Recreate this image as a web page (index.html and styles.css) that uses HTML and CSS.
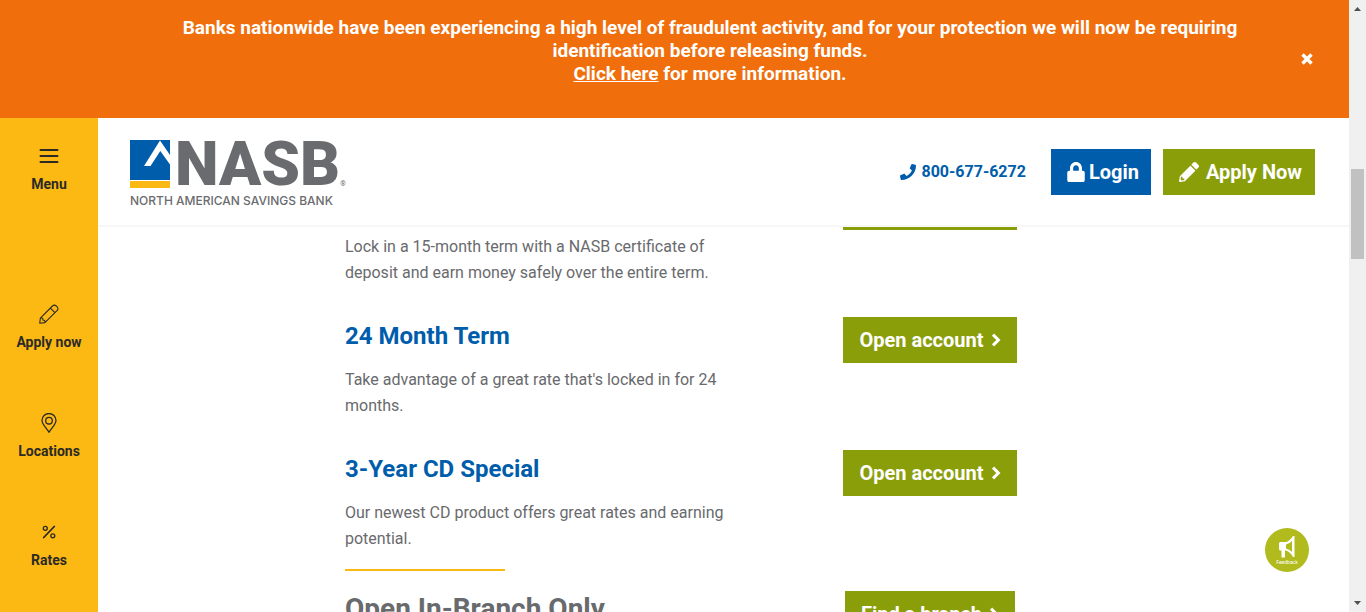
FILE: index.html
```html
<!DOCTYPE html>
<html lang="en">
<head>
<meta charset="utf-8">
<meta name="viewport" content="width=device-width, initial-scale=1">
<title>NASB</title>
<link rel="stylesheet" href="styles.css">
</head>
<body>
<svg class="defs" aria-hidden="true">
  <symbol id="chevron" viewBox="0 0 10 14"><path d="M2 1.600 7.400 7 2 12.400" fill="none" stroke="currentColor" stroke-width="3"/></symbol>
</svg>
<div class="page">
  <div class="site">
    <section class="alert" aria-label="Alert">
      <p class="alert-text">Banks nationwide have been experiencing a high level of fraudulent activity, and for your protection we will now be requiring identification before releasing funds.<br><a href="#info">Click here</a> for more information.</p>
      <button class="alert-close" type="button" aria-label="Close">
        <svg width="12" height="12" viewBox="0 0 12 12"><path d="M1.500 1.500 10.500 10.500M10.500 1.500 1.500 10.500" stroke="currentColor" stroke-width="3.400"/></svg>
      </button>
    </section>
    <div class="body">
      <nav class="rail" aria-label="Main">
        <button class="rail-item rail-menu" type="button">
          <svg width="20" height="20" viewBox="0 0 20 20"><path d="M1.500 4h17M1.500 10h17M1.500 16h17" stroke="currentColor" stroke-width="2" stroke-linecap="round"/></svg>
          Menu
        </button>
        <a class="rail-item" href="#apply">
          <svg width="22" height="20" viewBox="0 0 22 22" fill="none" stroke="currentColor" stroke-width="1.200" stroke-linejoin="round"><path d="M.8 21.200 1.500 15.500 14.800 2.200a3 3 0 0 1 4.200 0l.8.8a3 3 0 0 1 0 4.200L6.500 20.500ZM12.500 4.500l5 5M1.500 15.500c2-.6 3 .4 2.800 2.200 1.700-.2 2.700 1 2.200 2.800"/></svg>
          Apply now
        </a>
        <a class="rail-item" href="#locations">
          <svg width="20" height="20" viewBox="0 0 20 20" fill="none" stroke="currentColor" stroke-width="1.300"><path d="M10 19.300C8.500 16.300 3 11.500 3 7.500a7 7 0 0 1 14 0c0 4-5.500 8.800-7 11.800Z"/><circle cx="10" cy="7.700" r="3.300"/></svg>
          Locations
        </a>
        <a class="rail-item" href="#rates">
          <svg width="20" height="20" viewBox="0 0 20 20" fill="none" stroke="currentColor" stroke-width="1.300"><path d="M4.700 15.500 15.300 4.500" stroke-width="1.800" stroke-linecap="round"/><circle cx="6.300" cy="6.300" r="2"/><circle cx="13.800" cy="13.800" r="2"/></svg>
          Rates
        </a>
      </nav>
      <div class="column">
        <header class="header">
          <a class="logo" href="#home">
            <span class="logo-top">
              <svg class="logo-mark" width="40" height="48" viewBox="0 0 40 48"><path fill="#005dab" d="M0 0h40v40H0z"/><path fill="#fdb913" d="M0 41h40v7H0z"/><path fill="#fff" d="M30 .5 40 15V24.500L30.300 11 20.500 26H14Z"/></svg>
              <span class="logo-name">NASB</span>
              <span class="logo-reg">®</span>
            </span>
            <span class="logo-sub">NORTH AMERICAN SAVINGS BANK</span>
          </a>
          <div class="actions">
            <a class="phone" href="tel:8006776272">
              <svg width="16" height="16" viewBox="0 0 512 512" fill="currentColor"><path d="M493.400 24.600l-104-24c-11.300-2.600-22.900 3.300-27.500 13.900l-48 112c-4.200 9.800-1.400 21.300 6.900 28l60.600 49.600c-36 76.700-98.900 140.500-177.200 177.200l-49.600-60.600c-6.800-8.300-18.200-11.100-28-6.900l-112 48C3.900 366.500-2 378.100.6 389.400l24 104C27.100 504.200 36.700 512 48 512c256.100 0 464-207.500 464-464 0-11.200-7.700-20.900-18.600-23.400z"/></svg>
              800-677-6272
            </a>
            <a class="btn btn-login" href="#login">
              <svg width="18" height="20" viewBox="0 0 448 512" fill="currentColor"><path d="M400 224h-24v-72C376 68.200 307.800 0 224 0S72 68.200 72 152v72H48c-26.500 0-48 21.500-48 48v192c0 26.500 21.500 48 48 48h352c26.500 0 48-21.500 48-48V272c0-26.500-21.500-48-48-48zm-104 0H152v-72c0-39.700 32.300-72 72-72s72 32.300 72 72v72z"/></svg>
              Login
            </a>
            <a class="btn btn-apply" href="#apply">
              <svg width="20" height="20" viewBox="0 0 512 512" fill="currentColor"><path d="M497.900 142.100l-46.100 46.100c-4.700 4.700-12.300 4.700-17 0l-111-111c-4.700-4.700-4.700-12.300 0-17l46.100-46.100c18.700-18.700 49.100-18.700 67.900 0l60.100 60.100c18.800 18.700 18.800 49.100 0 67.900zM284.200 99.800L21.600 362.400.4 483.900c-2.900 16.400 11.400 30.600 27.800 27.800l121.500-21.300 262.600-262.600c4.700-4.700 4.700-12.300 0-17l-111-111c-4.800-4.700-12.400-4.700-17.100 0zM88 424h48v36.300l-64.500 11.300-31.100-31.100L51.700 376H88v48z"/></svg>
              Apply Now
            </a>
          </div>
        </header>
        <main class="content">
          <div class="offers">
            <section class="offer offer-first">
              <p class="offer-text">Lock in a 15-month term with a NASB certificate of deposit and earn money safely over the entire term.</p>
              <a class="btn" href="#open">Open account <svg width="10" height="14"><use href="#chevron"/></svg></a>
            </section>
            <section class="offer">
              <div>
                <h3 class="offer-title">24 Month Term</h3>
                <p class="offer-text">Take advantage of a great rate that's locked in for 24 months.</p>
              </div>
              <a class="btn" href="#open">Open account <svg width="10" height="14"><use href="#chevron"/></svg></a>
            </section>
            <section class="offer">
              <div>
                <h3 class="offer-title">3-Year CD Special</h3>
                <p class="offer-text">Our newest CD product offers great rates and earning potential.</p>
              </div>
              <a class="btn" href="#open">Open account <svg width="10" height="14"><use href="#chevron"/></svg></a>
            </section>
            <section class="offer branch">
              <h2 class="branch-title">Open In-Branch Only</h2>
              <a class="btn" href="#branch">Find a branch <svg width="10" height="14"><use href="#chevron"/></svg></a>
            </section>
          </div>
        </main>
      </div>
    </div>
    <button class="feedback" type="button">
      <svg width="20" height="22" viewBox="0 0 20 22"><path fill="#fff" fill-rule="evenodd" d="M3 6h6.500C12 5 14 3 16 0H17.500V21H16C14.500 18 12 15.500 9 14.500H8V21.500H4.500V14.500H3L2 13.500V7ZM9 8.500V12.500Q13 13.500 15 16V5Q12.500 7.800 9 8.500Z"/></svg>
      Feedback
    </button>
  </div>
  <div class="scrollbar" aria-hidden="true">
    <svg width="7" height="4" viewBox="0 0 7 4"><path fill="#505050" d="M0 4 3.500 0 7 4z"/></svg>
    <div class="track"><div class="thumb"></div></div>
    <svg width="7" height="4" viewBox="0 0 7 4"><path fill="#505050" d="M0 0h7L3.500 4z"/></svg>
  </div>
</div>
</body>
</html>
```

FILE: styles.css
```css
* { box-sizing: border-box; }

body {
  margin: 0;
  font-family: Roboto, "Liberation Sans", sans-serif;
  font-size: 16px;
  color: #696a6d;
  background: #fff;
}

h2, h3, p { margin: 0; }
a { color: inherit; text-decoration: none; }
button { border: 0; padding: 0; background: none; font: inherit; color: inherit; cursor: pointer; }
svg { flex: none; }

.defs { position: absolute; width: 0; height: 0; }

.page { display: flex; height: 100vh; overflow: hidden; }
.site { position: relative; flex: 1; min-width: 0; display: flex; flex-direction: column; }

.alert {
  display: flex;
  align-items: center;
  padding: 16px 36px 33px 72px;
  background: #f06e0c;
  color: #fff;
}
.alert-text {
  flex: 1;
  padding: 0 45px 0 92px;
  text-align: center;
  font-size: 19px;
  font-weight: 700;
  line-height: 23px;
}
.alert-text a { text-decoration: underline; }
.alert-close { display: flex; margin-top: 16px; }

.body { flex: 1; min-height: 0; display: flex; }

.rail {
  flex: none;
  width: 98px;
  padding-top: 28px;
  display: flex;
  flex-direction: column;
  gap: 61px;
  background: #fdb913;
  color: #2b2a26;
}
.rail-item {
  display: flex;
  flex-direction: column;
  align-items: center;
  gap: 8px;
  font-size: 14px;
  font-weight: 700;
  line-height: 20px;
}
.rail-menu { margin-bottom: 49px; }

.column { flex: 1; min-width: 0; display: flex; flex-direction: column; }

.header {
  flex: none;
  display: flex;
  align-items: center;
  justify-content: space-between;
  height: 109px;
  padding: 0 34px 0 32px;
  border-bottom: 2px solid #f7f7f7;
}
.logo { display: flex; flex-direction: column; gap: 6px; padding-top: 4px; color: #6a6b6e; }
.logo-top { display: flex; align-items: flex-end; }
.logo-name {
  margin-left: 5px;
  font-size: 62px;
  font-weight: 900;
  line-height: 48px;
}
.logo-reg { font-size: 7px; line-height: 8px; }
.logo-sub { font-family: Inter, sans-serif; font-size: 12px; font-weight: 500; line-height: 14px; }

.actions { display: flex; align-items: center; gap: 12px; }
.phone {
  display: flex;
  align-items: center;
  gap: 6px;
  margin-right: 13px;
  color: #005dab;
  font-weight: 700;
}
.btn {
  display: flex;
  align-items: center;
  justify-content: center;
  gap: 7px;
  height: 46px;
  padding: 0 16px;
  background: #8a9e0a;
  color: #fff;
  font-size: 20px;
  font-weight: 700;
  white-space: nowrap;
}
.btn-login { gap: 4px; padding: 0 12px 0 16px; background: #005dab; }
.btn-apply { padding: 0 13px 0 16px; }

.content { flex: 1; min-height: 0; overflow: hidden; padding: 0 16px; }
.offers { max-width: 757px; margin: 0 auto; }
.offer {
  display: grid;
  grid-template-columns: 1fr 344px;
  column-gap: 16px;
  align-items: start;
  margin-bottom: 32px;
}
.offer .btn { justify-self: center; }
.offer-first .offer-text { padding-top: 7px; }
.offer-first .btn { margin-top: -43px; }
.offer-title {
  margin-bottom: 12px;
  color: #005dab;
  font-size: 24px;
  font-weight: 700;
  line-height: 38px;
}
.offer-text { line-height: 1.6; }
.branch { margin-top: -15px; }
.branch::before {
  content: "";
  grid-column: 1 / -1;
  width: 160px;
  height: 2px;
  margin-bottom: 20px;
  background: #fdb913;
}
.branch-title { font-size: 28px; font-weight: 700; line-height: 36px; }

.feedback {
  position: absolute;
  right: 40px;
  bottom: 40px;
  width: 44px;
  height: 44px;
  display: flex;
  flex-direction: column;
  align-items: center;
  justify-content: center;
  gap: 1px;
  border-radius: 50%;
  background: #b1bb1e;
  color: #fff;
  font-size: 5px;
  line-height: 6px;
}

.scrollbar {
  flex: none;
  width: 17px;
  display: flex;
  flex-direction: column;
  align-items: center;
  padding: 7px 0;
  background: #f0f0f0;
}
.track { flex: 1; padding-top: 158px; }
.thumb { width: 13px; height: 90px; background: #c1c1c1; }
```
